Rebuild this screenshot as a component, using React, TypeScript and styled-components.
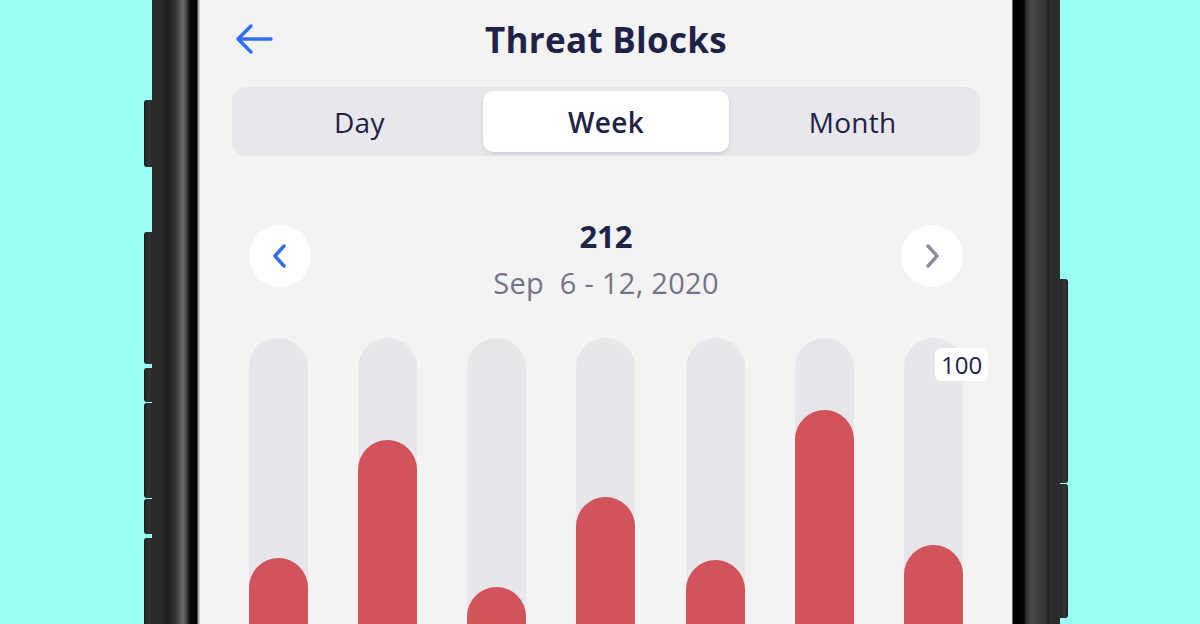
import React from "react";
import styled, { createGlobalStyle, css } from "styled-components";

const Global = createGlobalStyle`
  html, body { margin: 0; padding: 0; }
  body {
    background: #99fff5;
    overflow: hidden;
    font-family: "Open Sans", "Noto Sans", sans-serif;
  }
`;

const Stage = styled.div`
  display: flex;
  align-items: flex-start;
  height: 624px;
  padding-left: 144px;
  overflow: hidden;
  background: #99fff5;
`;

const SideButtons = styled.div<{ $side: "left" | "right"; $top: number }>`
  display: flex;
  flex-direction: column;
  width: 8px;
  padding-top: ${(p) => p.$top}px;
`;

const SideKey = styled.div<{ $side: "left" | "right"; $h: number; $gap: number }>`
  height: ${(p) => p.$h}px;
  margin-top: ${(p) => p.$gap}px;
  background: linear-gradient(90deg, #262626, #333 60%, #2a2a2a);
  ${(p) =>
    p.$side === "left"
      ? css`border-radius: 3px 0 0 3px; border-left: 1px solid #1b1b1b;`
      : css`border-radius: 0 3px 3px 0; border-right: 1px solid #1b1b1b;`}
`;

const Phone = styled.div`
  display: flex;
  height: 624px;
`;

const Bezel = styled.div<{ $side: "left" | "right" }>`
  width: 48px;
  height: 100%;
  background: ${(p) =>
    p.$side === "left"
      ? "linear-gradient(90deg, #2c2c2c 0px, #2a2a2a 10px, #1e1e1e 16px, #3a3a3a 24px, #6c6c6c 31px, #4a4a4a 34px, #0a0a0a 38px, #000 45px, #9a9a9a 46px, #d8d8d8 48px)"
      : "linear-gradient(90deg, #cfcfcf 0px, #000 1px, #050505 12px, #2f2f2f 14px, #4a4a4a 20px, #3c3c3c 28px, #343434 34px, #1f1f1f 36px, #2e2e2e 38px, #2b2b2b 48px)"};
`;

const Screen = styled.div`
  width: 812px;
  height: 100%;
  box-sizing: border-box;
  background: #f3f3f4;
  padding: 0 32px;
  display: flex;
  flex-direction: column;
  overflow: hidden;
  & > * { flex-shrink: 0; }
`;

const Header = styled.div`
  height: 78px;
  display: grid;
  grid-template-columns: 1fr auto 1fr;
  align-items: center;
`;

const BackButton = styled.button`
  justify-self: start;
  margin-left: 2px;
  padding: 0;
  border: 0;
  background: none;
  display: flex;
`;

const Title = styled.h1`
  margin: 0;
  font-size: 35px;
  font-weight: 700;
  color: #1e2247;
  letter-spacing: 0.3px;
`;

const SegControl = styled.div`
  margin-top: 9px;
  height: 69px;
  box-sizing: border-box;
  padding: 4px;
  background: #e8e8ec;
  border-radius: 14px;
  display: grid;
  grid-template-columns: repeat(3, 1fr);
`;

const Tab = styled.div<{ $active?: boolean }>`
  display: flex;
  align-items: center;
  justify-content: center;
  font-size: 28px;
  color: #1e2247;
  font-weight: ${(p) => (p.$active ? 600 : 500)};
  letter-spacing: 0.3px;
  border-radius: 10px;
  ${(p) =>
    p.$active &&
    css`
      background: #ffffff;
      box-shadow: 0 2px 4px rgba(30, 34, 71, 0.14);
    `}
`;

const NavRow = styled.div`
  margin-top: 60px;
  padding: 0 17px;
  display: flex;
  justify-content: space-between;
  align-items: flex-start;
`;

const CircleButton = styled.button`
  margin-top: 9px;
  width: 62px;
  height: 62px;
  border-radius: 50%;
  border: 0;
  background: #ffffff;
  display: flex;
  align-items: center;
  justify-content: center;
  padding: 0;
`;

const Summary = styled.div`
  text-align: center;
`;

const Count = styled.div`
  font-size: 31px;
  font-weight: 700;
  line-height: 40px;
  color: #1e2247;
`;

const Range = styled.div`
  margin-top: 7px;
  font-size: 29px;
  line-height: 40px;
  color: #737589;
  letter-spacing: 0.3px;
  white-space: pre;
`;

const Chart = styled.div`
  margin-top: 35px;
  padding: 0 17px;
  display: flex;
  justify-content: space-between;
`;

const Track = styled.div`
  position: relative;
  width: 59px;
  height: 400px;
  background: #e7e7eb;
  border-radius: 29.5px 29.5px 0 0;
  display: flex;
  flex-direction: column;
  justify-content: flex-end;
`;

const Fill = styled.div`
  width: 100%;
  background: #d1535b;
  border-radius: 29.5px 29.5px 0 0;
`;

const ValueLabel = styled.div`
  position: absolute;
  top: 10px;
  left: 31px;
  height: 33px;
  padding: 0 6px;
  display: flex;
  align-items: center;
  background: #ffffff;
  border-radius: 6px;
  font-size: 24px;
  color: #1e2247;
`;

const bars = [180, 298, 151, 241, 178, 328, 193];

export default function App() {
  return (
    <>
      <Global />
      <Stage>
        <SideButtons $side="left" $top={100}>
          <SideKey $side="left" $h={67} $gap={0} />
          <SideKey $side="left" $h={132} $gap={65} />
          <SideKey $side="left" $h={34} $gap={4} />
          <SideKey $side="left" $h={95} $gap={1} />
          <SideKey $side="left" $h={35} $gap={1} />
          <SideKey $side="left" $h={120} $gap={4} />
        </SideButtons>
        <Phone>
          <Bezel $side="left" />
          <Screen>
            <Header>
              <BackButton aria-label="Back">
                <svg width="40" height="34" viewBox="0 0 40 34" fill="none">
                  <path
                    d="M37 17H4M17 4L4 17l13 13"
                    stroke="#2f6df6"
                    strokeWidth="3.4"
                    strokeLinecap="round"
                    strokeLinejoin="round"
                  />
                </svg>
              </BackButton>
              <Title>Threat Blocks</Title>
              <span />
            </Header>
            <SegControl>
              <Tab>Day</Tab>
              <Tab $active>Week</Tab>
              <Tab>Month</Tab>
            </SegControl>
            <NavRow>
              <CircleButton aria-label="Previous">
                <svg width="18" height="26" viewBox="0 0 18 26" fill="none">
                  <path
                    d="M13 3L4 13l9 10"
                    stroke="#2f6df6"
                    strokeWidth="3.4"
                    strokeLinecap="round"
                    strokeLinejoin="round"
                  />
                </svg>
              </CircleButton>
              <Summary>
                <Count>212</Count>
                <Range>{"Sep  6 - 12, 2020"}</Range>
              </Summary>
              <CircleButton aria-label="Next">
                <svg width="18" height="26" viewBox="0 0 18 26" fill="none">
                  <path
                    d="M5 3l9 10-9 10"
                    stroke="#8a8da0"
                    strokeWidth="3.4"
                    strokeLinecap="round"
                    strokeLinejoin="round"
                  />
                </svg>
              </CircleButton>
            </NavRow>
            <Chart>
              {bars.map((h, i) => (
                <Track key={i}>
                  <Fill style={{ height: h }} />
                  {i === bars.length - 1 && <ValueLabel>100</ValueLabel>}
                </Track>
              ))}
            </Chart>
          </Screen>
          <Bezel $side="right" />
        </Phone>
        <SideButtons $side="right" $top={279}>
          <SideKey $side="right" $h={204} $gap={0} />
          <SideKey $side="right" $h={134} $gap={1} />
        </SideButtons>
      </Stage>
    </>
  );
}
